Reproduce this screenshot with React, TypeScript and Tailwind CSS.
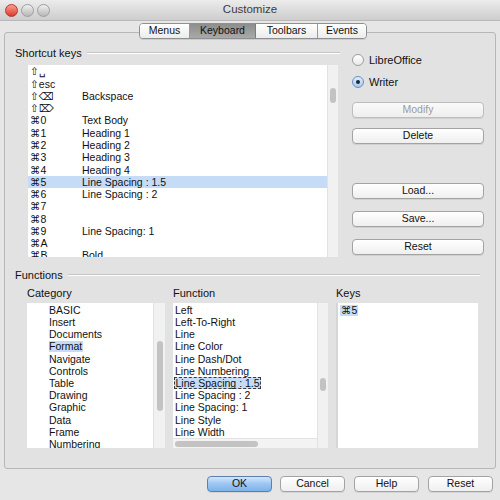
import React from 'react';

const shortcuts: [string, string][] = [
  ['⇧␣', ''],
  ['⇧esc', ''],
  ['⇧⌫', 'Backspace'],
  ['⇧⌦', ''],
  ['⌘0', 'Text Body'],
  ['⌘1', 'Heading 1'],
  ['⌘2', 'Heading 2'],
  ['⌘3', 'Heading 3'],
  ['⌘4', 'Heading 4'],
  ['⌘5', 'Line Spacing : 1.5'],
  ['⌘6', 'Line Spacing : 2'],
  ['⌘7', ''],
  ['⌘8', ''],
  ['⌘9', 'Line Spacing: 1'],
  ['⌘A', ''],
  ['⌘B', 'Bold'],
];

const categories = [
  'BASIC',
  'Insert',
  'Documents',
  'Format',
  'Navigate',
  'Controls',
  'Table',
  'Drawing',
  'Graphic',
  'Data',
  'Frame',
  'Numbering',
];

const functions = [
  'Left',
  'Left-To-Right',
  'Line',
  'Line Color',
  'Line Dash/Dot',
  'Line Numbering',
  'Line Spacing : 1.5',
  'Line Spacing : 2',
  'Line Spacing: 1',
  'Line Style',
  'Line Width',
];

function Button({ label, disabled, primary, className = '' }: { label: string; disabled?: boolean; primary?: boolean; className?: string }) {
  const look = primary
    ? 'bg-gradient-to-b from-[#d3e6fb] via-[#9cc5f2] to-[#7db2ec] border-[#5c7fae] text-[#111]'
    : disabled
      ? 'bg-gradient-to-b from-[#fafafa] to-[#eeeeee] border-[#bdbdbd] text-[#9c9c9c]'
      : 'bg-gradient-to-b from-white to-[#efefef] border-[#a3a3a3] text-[#111]';
  return (
    <div className={`h-[16px] flex items-center justify-center rounded-[4px] border shadow-[0_1px_0_rgba(0,0,0,0.08)] text-[10.5px] ${look} ${className}`}>
      {label}
    </div>
  );
}

function Radio({ label, checked }: { label: string; checked?: boolean }) {
  return (
    <div className="flex items-center h-[12px] gap-[5px]">
      <div
        className={`w-[12px] h-[12px] rounded-full border flex items-center justify-center ${
          checked
            ? 'border-[#6a8fc0] bg-gradient-to-b from-[#e3eefb] to-[#a9c8ef]'
            : 'border-[#9d9d9d] bg-gradient-to-b from-white to-[#e9e9e9]'
        }`}
      >
        {checked && <div className="w-[4px] h-[4px] rounded-full bg-[#1b2a3d]" />}
      </div>
      <span className="text-[11px] text-[#111]">{label}</span>
    </div>
  );
}

function GroupLabel({ text, lineClass }: { text: string; lineClass: string }) {
  return (
    <div className="flex items-center h-[12px]">
      <span className="text-[11px] text-[#111] leading-none">{text}</span>
      <div className={`h-[2px] border-t border-[#c4c4c4] border-b-white border-b ${lineClass}`} />
    </div>
  );
}

function VTrack({ thumbTop, thumbH }: { thumbTop: string; thumbH: string }) {
  return (
    <div className="w-[11px] h-full bg-[#f1f1f1] border-l border-[#e2e2e2] flex flex-col items-center">
      <div className={`w-[6px] rounded-full bg-[#c3c3c3] ${thumbTop} ${thumbH}`} />
    </div>
  );
}

export default function App() {
  return (
    <div className="w-[500px] h-[500px] bg-[#e6e6e6] overflow-hidden flex flex-col font-['Liberation_Sans','DejaVu_Sans',sans-serif] text-[#111]">
      {/* title bar */}
      <div className="h-[21px] shrink-0 bg-gradient-to-b from-[#ececec] to-[#cdcdcd] border-b border-[#b9b9b9] flex items-center relative">
        <div className="flex items-center gap-[3px] pl-[5px]">
          <div className="w-[13px] h-[13px] rounded-full border border-[#b2392f] bg-gradient-to-b from-[#ff9a8e] to-[#d8382b]" />
          <div className="w-[13px] h-[13px] rounded-full border border-[#9e9e9e] bg-gradient-to-b from-[#f0f0f0] to-[#b8b8b8]" />
          <div className="w-[13px] h-[13px] rounded-full border border-[#9e9e9e] bg-gradient-to-b from-[#f0f0f0] to-[#b8b8b8]" />
        </div>
        <div className="flex-1 text-center pr-[50px] text-[11.5px] text-[#3c3c3c]">Customize</div>
      </div>

      {/* tabs */}
      <div className="flex pl-[139px] pt-[2px] relative z-10 -mb-[7px]">
        <div className="flex h-[16px] rounded-[4px] border border-[#8f8f8f] overflow-hidden text-[10.5px] shadow-[0_1px_0_rgba(0,0,0,0.1)]">
          <div className="w-[50px] flex items-center justify-center bg-gradient-to-b from-white to-[#ececec] border-r border-[#9a9a9a]">Menus</div>
          <div className="w-[66px] flex items-center justify-center bg-gradient-to-b from-[#8e8e8e] to-[#a9a9a9] border-r border-[#7c7c7c] text-[#111]">Keyboard</div>
          <div className="w-[62px] flex items-center justify-center bg-gradient-to-b from-white to-[#ececec] border-r border-[#9a9a9a]">Toolbars</div>
          <div className="w-[48px] flex items-center justify-center bg-gradient-to-b from-white to-[#ececec]">Events</div>
        </div>
      </div>

      {/* panel */}
      <div className="mx-[4px] h-[437px] shrink-0 rounded-[3px] border border-[#b7b7b7] bg-[#e2e2e2] flex flex-col">
        <div className="flex">
          {/* shortcut keys */}
          <div className="w-[335px] flex flex-col pt-[14px]">
            <div className="pl-[10px]">
              <GroupLabel text="Shortcut keys" lineClass="ml-[5px] flex-1" />
            </div>
            <div className="ml-[23px] mt-[6px] w-[310px] h-[192px] bg-white flex overflow-hidden">
              <div className="flex-1 pt-[0.5px]">
                {shortcuts.map(([k, f]) => (
                  <div
                    key={k}
                    className={`h-[12.28px] flex items-center text-[10.5px] leading-none ${k === '⌘5' ? 'bg-[#c6dcf6]' : ''}`}
                  >
                    <span className="w-[54px] pl-[2px]">{k}</span>
                    <span>{f}</span>
                  </div>
                ))}
              </div>
              <VTrack thumbTop="mt-[23px]" thumbH="h-[15px]" />
            </div>
          </div>

          {/* right column */}
          <div className="ml-[12px] w-[132px] flex flex-col pt-[21px]">
            <Radio label="LibreOffice" />
            <div className="mt-[10px]">
              <Radio label="Writer" checked />
            </div>
            <Button label="Modify" disabled className="mt-[14px]" />
            <Button label="Delete" className="mt-[10px]" />
            <Button label="Load..." className="mt-[39px]" />
            <Button label="Save..." className="mt-[12px]" />
            <Button label="Reset" className="mt-[12px]" />
          </div>
        </div>

        {/* functions */}
        <div className="mt-[12px] pl-[10px] pr-[15px]">
          <GroupLabel text="Functions" lineClass="ml-[5px] flex-1" />
        </div>
        <div className="flex mt-[6px] h-[12px] items-center text-[11px]">
          <span className="ml-[22px] w-[146px]">Category</span>
          <span className="w-[163px]">Function</span>
          <span>Keys</span>
        </div>
        <div className="flex mt-[4px] h-[145px]">
          {/* category */}
          <div className="ml-[22px] w-[138px] h-full bg-white flex overflow-hidden">
            <div className="flex-1 pt-[1px] pl-[22px]">
              {categories.map((c) => (
                <div key={c} className="h-[12.2px] flex items-center text-[10.5px] leading-none">
                  <span className={c === 'Format' ? 'bg-[#c6dcf6] pr-[1px]' : ''}>{c}</span>
                </div>
              ))}
            </div>
            <div className="w-[12px] h-full bg-[#f1f1f1] border-l border-[#e2e2e2] flex flex-col items-center">
              <div className="w-[6px] mt-[38px] h-[70px] rounded-full bg-[#c3c3c3]" />
            </div>
          </div>

          {/* function */}
          <div className="ml-[8px] w-[155px] h-full bg-white flex overflow-hidden">
            <div className="w-[144px] flex flex-col">
              <div className="flex-1 pt-[1px] pl-[1px]">
                {functions.map((f) => (
                  <div key={f} className="h-[12.2px] flex items-center text-[10.5px] leading-none">
                    {f === 'Line Spacing : 1.5' ? (
                      <span className="h-[12px] flex items-center bg-[#c6dcf6] border border-dashed border-[#3a3a3a] px-[0.5px]">{f}</span>
                    ) : (
                      <span className="pl-[1px]">{f}</span>
                    )}
                  </div>
                ))}
              </div>
              <div className="h-[11px] bg-[#f3f3f3] border-t border-[#e4e4e4] flex items-center pl-[2px]">
                <div className="w-[83px] h-[6px] rounded-full bg-[#c3c3c3]" />
              </div>
            </div>
            <div className="w-[11px] h-full bg-[#f1f1f1] border-l border-[#e2e2e2] flex flex-col items-center">
              <div className="w-[6px] mt-[75px] h-[13px] rounded-full bg-[#c3c3c3]" />
            </div>
          </div>

          {/* keys */}
          <div className="ml-[8px] w-[142px] h-full bg-white border-l-2 border-[#d6d6d6] pl-[2px] pt-[2px] flex flex-col items-start">
            <span className="flex items-center h-[11px] bg-[#c6dcf6] text-[10.5px] leading-none px-[1px]">⌘5</span>
          </div>
        </div>
      </div>

      {/* bottom buttons */}
      <div className="flex justify-end pr-[7px] mt-[7px]">
        <Button label="OK" primary className="w-[65px]" />
        <Button label="Cancel" className="w-[65px] ml-[8px]" />
        <Button label="Help" className="w-[65px] ml-[9px]" />
        <Button label="Reset" className="w-[65px] ml-[9px]" />
      </div>
    </div>
  );
}
